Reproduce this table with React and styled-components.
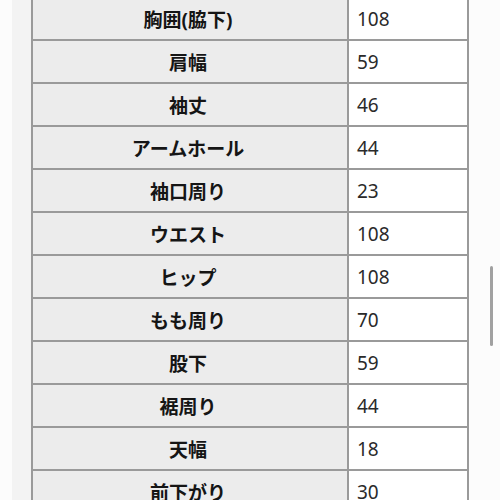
import styled, { createGlobalStyle } from 'styled-components'

const GlobalStyle = createGlobalStyle`
  html, body {
    margin: 0;
    padding: 0;
    background: #fcfcfc;
    overflow: hidden;
  }
`

const rows = [
  ['胸囲(脇下)', '108'],
  ['肩幅', '59'],
  ['袖丈', '46'],
  ['アームホール', '44'],
  ['袖口周り', '23'],
  ['ウエスト', '108'],
  ['ヒップ', '108'],
  ['もも周り', '70'],
  ['股下', '59'],
  ['裾周り', '44'],
  ['天幅', '18'],
  ['前下がり', '30'],
]

const Page = styled.div`
  position: relative;
  display: flex;
  width: 500px;
  height: 500px;
  padding-left: 12px;
  box-sizing: border-box;
  background: #fcfcfc;
  overflow: hidden;
`

const Gutter = styled.div`
  width: 19px;
  flex-shrink: 0;
  background: #f3f3f3;
`

const SizeTable = styled.table`
  border-collapse: collapse;
  width: 438px;
  height: fit-content;
  margin-top: -4px;
  font-family: 'Noto Sans', 'Noto Sans CJK JP', sans-serif;
  font-size: 19px;
  flex-shrink: 0;

  td {
    border: 2px solid #9a9a9a;
    height: 43px;
    padding: 0;
    box-sizing: border-box;
  }
`

const Label = styled.td`
  width: 316px;
  background: #ececec;
  color: #151515;
  font-weight: 700;
  text-align: center;
  padding-right: 4px !important;
`

const Value = styled.td`
  background: #ffffff;
  color: #2a2a2a;
  padding-left: 8px !important;
`

const Scrollbar = styled.div`
  position: absolute;
  left: 490px;
  top: 266px;
  width: 3px;
  height: 80px;
  border-radius: 2px;
  background: #a0a0a0;
`

export default function App() {
  return (
    <>
      <GlobalStyle />
      <Page>
        <Gutter />
        <SizeTable>
          <tbody>
            {rows.map(([label, value]) => (
              <tr key={label}>
                <Label>{label}</Label>
                <Value>{value}</Value>
              </tr>
            ))}
          </tbody>
        </SizeTable>
        <Scrollbar />
      </Page>
    </>
  )
}
